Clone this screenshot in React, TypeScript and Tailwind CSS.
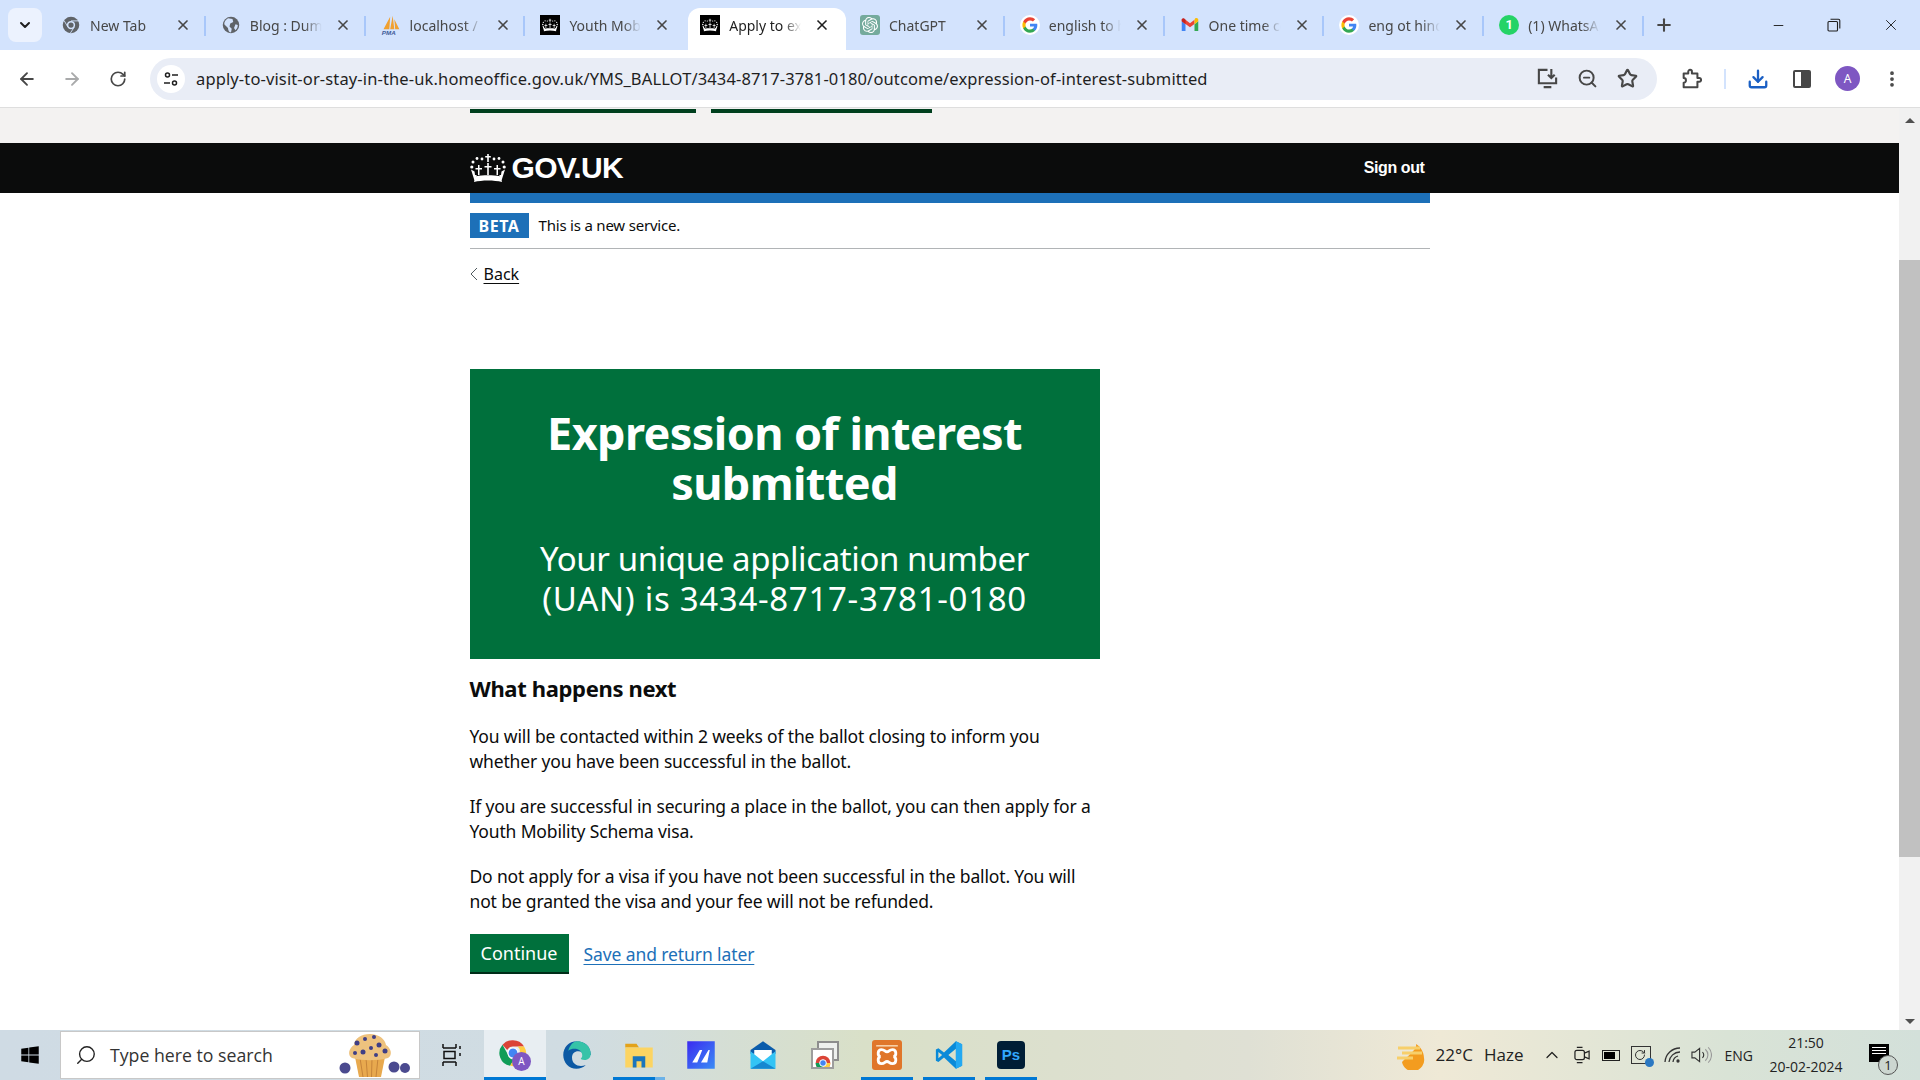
import { ArrowLeft, ArrowRight, RotateCw, X, Plus, Minus, Star, ZoomOut, ChevronDown, ChevronUp, Search, MoreVertical, Download } from "lucide-react";
import { FaWindows } from "react-icons/fa";
import { SiOpenai } from "react-icons/si";
import type { ReactNode } from "react";

const Crown = ({ className }: { className: string }) => (
  <svg viewBox="0 0 36 28" className={className} fill="currentColor">
    <path d="M17.200 0h1.600v2h2v1.600h-2V8h-1.600V3.600h-2V2h2z" />
    <circle cx="12" cy="5" r="1.400" /><circle cx="24" cy="5" r="1.400" />
    <circle cx="7" cy="4.500" r="1.400" /><circle cx="29" cy="4.500" r="1.400" />
    <circle cx="3" cy="8" r="1.500" /><circle cx="33" cy="8" r="1.500" />
    <circle cx="1.800" cy="13" r="1.600" /><circle cx="34.200" cy="13" r="1.600" />
    <path d="M17.200 9h1.600v3h2.700v1.500h-2.700V21h-1.600v-7.500h-2.700V12h2.700zM8 11h1.500v3h2.500v1.500H9.500V21H8v-5.500H5.500V14H8zM26.500 11H28v3h2.500v1.500H28V21h-1.500v-5.500H24V14h2.500z" />
    <path d="M1 15.500l3.500 2 .5 3.500h2l-1 1.200c7-1.300 17-1.300 24 0l-1-1.200h2l.5-3.500 3.500-2-3 9.500c-.500 1-.500 2 0 3-8-2-20-2-28 0 .500-1 .500-2 0-3z" />
  </svg>
);

const GoogleIcon = () => (
  <svg viewBox="0 0 24 24" className="w-4 h-4">
    <path fill="#4285F4" d="M23 12.300c0-.8-.1-1.600-.2-2.300H12v4.400h6.200c-.3 1.400-1.100 2.600-2.300 3.400v2.800h3.700c2.100-2 3.400-4.900 3.400-8.300z" />
    <path fill="#34A853" d="M12 23.500c3.100 0 5.700-1 7.600-2.800l-3.700-2.900c-1 .7-2.300 1.100-3.900 1.100-3 0-5.500-2-6.400-4.700H1.800v2.900C3.700 20.900 7.500 23.500 12 23.500z" />
    <path fill="#FBBC05" d="M5.600 14.200c-.5-1.400-.5-3 0-4.400V6.900H1.800c-1.600 3.200-1.600 7 0 10.200z" />
    <path fill="#EA4335" d="M12 5.100c1.700 0 3.200.6 4.400 1.700l3.300-3.300C17.700 1.600 15.100.5 12 .5 7.500.5 3.700 3.100 1.800 6.900l3.800 2.900C6.500 7.100 9 5.100 12 5.100z" />
  </svg>
);

const tabs: { title: string; icon: ReactNode; active?: boolean; noSep?: boolean }[] = [
  {
    title: "New Tab",
    icon: (
      <svg viewBox="0 0 24 24" className="w-[18px] h-[18px]">
        <circle cx="12" cy="12" r="11" fill="#5f6368" />
        <circle cx="12" cy="12" r="5.500" fill="#d3e3fd" />
        <circle cx="12" cy="12" r="3.500" fill="#5f6368" />
        <path d="M12 6.500h10M8 15l-5-8.500M16.500 14.500L11 23" stroke="#d3e3fd" strokeWidth="1.200" />
      </svg>
    ),
  },
  {
    title: "Blog : Dumm",
    icon: (
      <svg viewBox="0 0 24 24" className="w-[18px] h-[18px]">
        <circle cx="12" cy="12" r="11" fill="#5f6368" />
        <path d="M8 3l6 1 1 4-4 2-1 4 3 3-1 5c-3 0-4-4-4-6L3 11c0-4 2-6 5-8zM18 11l3 1c0 3-1 5-3 7l-2-3z" fill="#d3e3fd" />
      </svg>
    ),
  },
  {
    title: "localhost / ",
    icon: (
      <svg viewBox="0 0 24 24" className="w-5 h-5">
        <path d="M3 17L11 2l-1 15zM11 17l3-16 2 16zM17 17L16 5l6 12z" fill="#f0a030" />
        <text x="1" y="23.500" fontSize="7.500" fontWeight="700" fontStyle="italic" fill="#3d5a98" fontFamily="Liberation Sans, sans-serif">PMA</text>
      </svg>
    ),
  },
  {
    title: "Youth Mobil",
    icon: (
      <span className="w-5 h-5 bg-black text-white flex items-center justify-center">
        <Crown className="w-4 h-4" />
      </span>
    ),
    noSep: true,
  },
  {
    title: "Apply to exp",
    active: true,
    icon: (
      <span className="w-5 h-5 bg-black text-white flex items-center justify-center">
        <Crown className="w-4 h-4" />
      </span>
    ),
    noSep: true,
  },
  {
    title: "ChatGPT",
    icon: (
      <span className="w-5 h-5 bg-[#74aa9c] text-white rounded-[3px] flex items-center justify-center">
        <SiOpenai className="w-4 h-4" />
      </span>
    ),
  },
  {
    title: "english to h",
    icon: (
      <span className="w-5 h-5 bg-white rounded-full flex items-center justify-center">
        <GoogleIcon />
      </span>
    ),
  },
  {
    title: "One time co",
    icon: (
      <svg viewBox="0 0 24 24" className="w-[18px] h-[18px]">
        <path fill="#4285F4" d="M1 20h5V11L1 7z" />
        <path fill="#34A853" d="M18 20h5V7l-5 4z" />
        <path fill="#EA4335" d="M1 7l11 8 6-4.500V5l-6 4.500L6 5l-5-1z" />
        <path fill="#FBBC04" d="M18 5v6l5-4V5c0-2-2-3-4-2z" />
        <path fill="#C5221F" d="M1 7l5 4V5L4 3C2.500 2.500 1 3.500 1 5z" />
      </svg>
    ),
  },
  {
    title: "eng ot hindi",
    icon: (
      <span className="w-5 h-5 bg-white rounded-full flex items-center justify-center">
        <GoogleIcon />
      </span>
    ),
  },
  {
    title: "(1) WhatsAp",
    icon: (
      <span className="w-5 h-5 rounded-full bg-[#25d366] text-white flex items-center justify-center text-[13px] font-bold font-['Roboto',sans-serif]">
        1
      </span>
    ),
  },
];

const Muffin = () => (
  <svg viewBox="0 0 72 48" className="w-[72px] h-12">
    <circle cx="6" cy="37" r="5.500" fill="#4b4a8f" />
    <circle cx="55" cy="36" r="5.500" fill="#4b4a8f" />
    <circle cx="66" cy="37" r="5" fill="#4b4a8f" />
    <path d="M16 26h30l-4 20H20z" fill="#e8a94e" />
    <path d="M21 27l3 19M27 27l1.500 19M33 27l-.500 19M39 27l-2 19" stroke="#c6843a" strokeWidth="1" />
    <path d="M13 27c-5-3-3-10 2-13 1-7 7-11 16-11s15 5 16 11c5 3 7 10 2 13-10 3-26 3-36 0z" fill="#eec27e" />
    <g fill="#3f3e86">
      <circle cx="18" cy="12" r="2.500" /><circle cx="26" cy="8" r="2" /><circle cx="35" cy="6" r="2" />
      <circle cx="40" cy="14" r="2.500" /><circle cx="24" cy="21" r="2.500" /><circle cx="32" cy="17" r="2" />
      <circle cx="16" cy="22" r="2" /><circle cx="46" cy="20" r="2.500" /><circle cx="37" cy="24" r="2" />
    </g>
  </svg>
);

const apps: { icon: ReactNode; bar?: string; bg?: string }[] = [
  {
    bar: "left-0 right-0 bg-[#0078d4]",
    bg: "bg-[#e8eef2]",
    icon: (
      <span className="relative w-8 h-8 block">
        <svg viewBox="0 0 24 24" className="w-7 h-7">
          <path fill="#db4437" d="M12 1a11 11 0 0 1 9.500 5.500H12a5.500 5.500 0 0 0-5 3L3 5a11 11 0 0 1 9-4z" />
          <path fill="#0f9d58" d="M3 5l4.500 8a5.500 5.500 0 0 0 5.500 4.500L9.500 23A11 11 0 0 1 3 5z" />
          <path fill="#ffcd40" d="M21.500 6.500A11 11 0 0 1 9.500 23l4-7a5.500 5.500 0 0 0 2.500-9.500z" />
          <circle cx="12" cy="12" r="4.300" fill="#4285f4" stroke="#fff" strokeWidth="1" />
        </svg>
        <span className="absolute right-0 bottom-0 w-[19px] h-[19px] rounded-full bg-[#7e57c2] text-white text-[10px] flex items-center justify-center">A</span>
      </span>
    ),
  },
  {
    icon: (
      <svg viewBox="0 0 24 24" className="w-[30px] h-[30px]">
        <path fill="#0c59a4" d="M12 1C5.500 1 1 6 1 12c0 6 4.500 11 10.500 11 3 0 5.500-1 7.500-3-5 2-11 0-11-6 0-3 2-5 5-5 2.500 0 4 1.500 4 3h6c0-7-5-11-11.500-11z" />
        <path fill="#36c3a8" d="M12 1c6.500 0 11 4.500 11 10 0 3-2 5-5 5-2 0-3-1-3-1 1-1 1.500-2 1-4C15 7 9 5.500 5 8.500 6.500 4 9 1 12 1z" />
      </svg>
    ),
  },
  {
    bar: "left-[5px] right-[5px] bg-[linear-gradient(90deg,#0078d4_80%,#6cb2e8_80%)]",
    icon: (
      <svg viewBox="0 0 24 24" className="w-[30px] h-[30px]">
        <path fill="#e3a21a" d="M1 3h9l2 3h-11z" />
        <path fill="#fcd462" d="M1 6h22v16H1z" />
        <path fill="#1b75bc" d="M7 13h10v9h-3v-5h-4v5H7z" />
      </svg>
    ),
  },
  {
    icon: (
      <svg viewBox="0 0 24 24" className="w-[30px] h-[30px]">
        <defs>
          <linearGradient id="mm" x1="0" y1="0" x2="1" y2="1">
            <stop offset="0" stopColor="#3b2bf0" />
            <stop offset="1" stopColor="#3a8cf5" />
          </linearGradient>
        </defs>
        <rect x="1" y="1" width="22" height="22" fill="url(#mm)" />
        <path d="M5 18l6-10h2l-4 10zM12 18l6-10h1l-2 10z" fill="#fff" />
      </svg>
    ),
  },
  {
    icon: (
      <svg viewBox="0 0 24 24" className="w-[30px] h-[30px]">
        <path fill="#0b5cab" d="M12 1l10 7v3H2V8z" />
        <path fill="#fff" d="M5 8h14v6l-7 4-7-4z" />
        <path fill="#33c4f5" d="M2 9l10 8 10-8v14H2z" />
        <path fill="#1587d0" d="M2 23l10-6 10 6z" />
      </svg>
    ),
  },
  {
    icon: (
      <span className="relative w-7 h-7 block">
        <span className="absolute right-0 top-0 w-[22px] h-5 bg-[#eef0ee] border-2 border-[#8d8d8d]" />
        <span className="absolute left-0 bottom-0 w-[23px] h-[21px] bg-white border-2 border-[#9d9d9d] overflow-hidden flex items-end justify-center">
          <svg viewBox="0 0 24 24" className="w-4 h-4 -mb-1">
            <circle cx="12" cy="12" r="11" fill="#db4437" />
            <path d="M1 12a11 11 0 0 0 11 11V12z" fill="#0f9d58" />
            <path d="M23 12a11 11 0 0 1-11 11V12z" fill="#ffcd40" />
            <circle cx="12" cy="12" r="5" fill="#4285f4" stroke="#fff" strokeWidth="1.500" />
          </svg>
        </span>
      </span>
    ),
  },
  {
    bar: "left-[5px] right-[5px] bg-[#0078d4]",
    icon: (
      <span className="w-[30px] h-[30px] rounded-[3px] bg-[#e0762a] flex items-center justify-center">
        <svg viewBox="0 0 24 24" className="w-[26px] h-[26px]" fill="none">
          <path d="M2 3.500h20" stroke="#f6cfa8" strokeWidth="1.500" />
          <path d="M7 7C10 7 10 9 12 9C14 9 14 7 17 7C21 7 21 13 18 13.500C21 14 21 20 17 20C14 20 14 18 12 18C10 18 10 20 7 20C3 20 3 14 6 13.500C3 13 3 7 7 7Z" stroke="#fff" strokeWidth="2.600" />
        </svg>
      </span>
    ),
  },
  {
    bar: "left-[5px] right-[5px] bg-[#0078d4]",
    icon: (
      <svg viewBox="0 0 24 24" className="w-[30px] h-[30px]">
        <path fill="#0a8ad8" fillRule="evenodd" d="M17.500 1L8 10 3.500 6.500 1.500 7.500v9l2 1L8 14l9.500 9 5-2.400V3.400zM17.500 7v10l-6-5zM3.500 9.500L6.500 12l-3 2.500z" />
        <path fill="#23a9f2" fillRule="evenodd" d="M17.500 1l5 2.400v17.200l-5 2.400zM17.500 7v10l0 0z" />
      </svg>
    ),
  },
  {
    bar: "left-[5px] right-[5px] bg-[#0078d4]",
    icon: (
      <span className="w-7 h-7 rounded-[4px] bg-[#001e36] text-[#31a8ff] text-[15px] font-bold flex items-center justify-center font-['Liberation_Sans',sans-serif]">
        Ps
      </span>
    ),
  },
];

export default function App() {
  return (
    <div className="h-screen w-full flex flex-col overflow-hidden bg-white font-['Noto_Sans',sans-serif]">
      {/* tab strip */}
      <div className="h-[50px] bg-[#d3e3fd] flex items-start shrink-0">
        <div className="w-[46px] h-[34px] shrink-0 flex justify-end mt-2">
          <div className="w-[34px] h-[34px] mr-1 rounded-lg bg-[#ecf2fe] flex items-center justify-center">
            <ChevronDown className="w-4 h-4 text-[#1f1f1f]" strokeWidth={3} />
          </div>
        </div>
        {tabs.map((t) => (
          <div
            key={t.title}
            className="relative isolate w-[159.8px] h-[42px] mt-2 shrink-0 flex items-center pb-2 pl-[15px]"
          >
            {t.active && <span className="absolute -z-10 left-[3px] -right-px top-0 bottom-0 bg-white rounded-t-xl" />}
            <span className="w-5 h-5 flex items-center justify-center shrink-0">{t.icon}</span>
            <span className={`ml-[9px] w-[72px] overflow-hidden whitespace-nowrap text-[14px] [mask-image:linear-gradient(to_right,black_75%,transparent)] ${t.active ? "text-[#1f1f1f]" : "text-[#474747]"}`}>
              {t.title}
            </span>
            <X className={`w-4 h-4 ml-[13px] shrink-0 ${t.active ? "text-[#1f1f1f]" : "text-[#474747]"}`} strokeWidth={2.500} />
            {!t.noSep && !t.active && <span className="absolute right-0 top-2 h-5 w-[2px] bg-[#a8c7fa]" />}
          </div>
        ))}
        <div className="w-[41px] h-[34px] mt-2 flex items-center justify-center">
          <Plus className="w-5 h-5 text-[#474747]" strokeWidth={2.500} />
        </div>
        <div className="flex-1 flex justify-end h-[34px] mt-2 text-[#1f1f1f]">
          <div className="w-[54px] flex items-center justify-center"><Minus className="w-[15px] h-[15px]" strokeWidth={1.500} /></div>
          <div className="w-[57px] flex items-center justify-center">
            <svg viewBox="0 0 14 14" className="w-[14px] h-[14px]" fill="none" stroke="currentColor" strokeWidth="1.100">
              <rect x="1" y="3.500" width="9.500" height="9.500" rx="1" />
              <path d="M3.500 1.200h8a1.300 1.300 0 0 1 1.300 1.300v8" />
            </svg>
          </div>
          <div className="w-[58px] flex items-center justify-center"><X className="w-[18px] h-[18px]" strokeWidth={1.250} /></div>
        </div>
      </div>

      {/* toolbar */}
      <div className="h-[58px] bg-white border-b border-[#dedede] flex items-center shrink-0 rounded-tl-xl rounded-tr-xl">
        <div className="w-[150px] shrink-0 flex items-center text-[#474747]">
          <ArrowLeft className="w-5 h-5 ml-[17px]" strokeWidth={2.250} />
          <ArrowRight className="w-5 h-5 ml-[25px] text-[#a9aaab]" strokeWidth={2.250} />
          <RotateCw className="w-[18px] h-[18px] ml-[27px]" strokeWidth={2.250} />
        </div>
        <div className="w-[1507px] h-[42px] bg-[#e9edf6] rounded-full flex items-center">
          <span className="w-7 h-7 ml-[7px] rounded-full bg-white flex items-center justify-center">
            <svg viewBox="0 0 16 16" className="w-4 h-4" fill="none" stroke="#1f1f1f" strokeWidth="1.500">
              <circle cx="4.500" cy="4" r="2" /><path d="M9 4h6M1 12h6" /><circle cx="11.500" cy="12" r="2" />
            </svg>
          </span>
          <span className="ml-[11px] pt-[2px] text-[16.5px] tracking-[0.13px] text-[#1f1f1f] whitespace-nowrap flex-1">
            apply-to-visit-or-stay-in-the-uk.homeoffice.gov.uk/YMS_BALLOT/3434-8717-3781-0180/outcome/expression-of-interest-submitted
          </span>
          <span className="flex items-center text-[#474747]">
            <svg viewBox="0 0 24 24" className="w-[23px] h-[23px] mr-[18px]" fill="none" stroke="currentColor" strokeWidth="2.200">
              <path d="M12 3H3v14h18v-6M8 21h8" /><path d="M16 2v9M12.500 8l3.500 3.500L19.500 8" />
            </svg>
            <ZoomOut className="w-[21px] h-[21px] mr-[19px]" strokeWidth={2.250} />
            <Star className="w-[21px] h-[21px] mr-[19px]" strokeWidth={2.500} />
          </span>
        </div>
        <div className="flex-1 flex items-center text-[#474747]">
          <svg viewBox="0 0 24 24" className="w-[22px] h-[22px] ml-[23px]" fill="none" stroke="currentColor" strokeWidth="2.200" strokeLinejoin="round">
            <path d="M4 6h5V4a2 2 0 0 1 4 0v2h6v5h2a2 2 0 0 1 0 4h-2v6H4v-5a2.500 2.500 0 0 0 0-5z" />
          </svg>
          <span className="w-[2px] h-5 bg-[#d3e3fd] ml-[22px]" />
          <Download className="w-[22px] h-[22px] ml-[21px] text-[#1a5fc4]" strokeWidth={2.500} />
          <span className="w-[18px] h-[18px] ml-[24px] border-2 border-[#474747] rounded-[2px] flex justify-end">
            <span className="w-2 h-full bg-[#474747]" />
          </span>
          <span className="w-[25px] h-[25px] ml-[24px] rounded-full bg-[#7e57c2] text-white text-[12px] flex items-center justify-center">A</span>
          <MoreVertical className="w-5 h-5 ml-[22px]" strokeWidth={2.500} />
        </div>
      </div>

      {/* page */}
      <div className="flex-1 min-h-0 flex">
        <div className="flex-1 min-w-0 overflow-hidden bg-white">
          <div className="h-[35px] bg-[#f3f2f1] pt-px">
            <div className="w-[960px] mx-auto flex">
              <div className="w-[226px] h-1 bg-[#00401e]" />
              <div className="w-[221px] h-1 ml-[15px] bg-[#00401e]" />
            </div>
          </div>
          <div className="h-[50px] bg-[#0b0c0c] text-white">
            <div className="w-[960px] h-full mx-auto flex items-center justify-between pr-[5px] font-['Liberation_Sans',sans-serif]">
              <div className="flex items-center">
                <Crown className="w-9 h-7" />
                <span className="ml-[6px] text-[30px] leading-none font-bold tracking-[-0.7px]">GOV.UK</span>
              </div>
              <span className="text-[16px] font-bold tracking-[-0.4px]">Sign out</span>
            </div>
          </div>
          <div className="w-[960px] mx-auto text-[#0b0c0c]">
            <div className="h-[10px] bg-[#1d70b8]" />
            <div className="mt-[10px] pb-[10px] border-b border-[#b1b4b6] h-[36px] flex items-start">
              <span className="w-[59px] h-[25px] bg-[#1d70b8] text-white text-[16px] font-bold tracking-[0.5px] flex items-center justify-center">BETA</span>
              <span className="ml-[10px] text-[15px] tracking-[-0.2px] leading-[25px]">This is a new service.</span>
            </div>
            <a className="mt-[13px] flex items-center h-[24px] text-[16px]">
              <svg viewBox="0 0 8 14" className="w-2 h-3.5 mr-[6px]" fill="none" stroke="#505a5f" strokeWidth="1">
                <path d="M7 1L1 7l6 6" />
              </svg>
              <span className="underline underline-offset-[3px]">Back</span>
            </a>

            <div className="w-[630px] mt-[83px]">
              <div className="bg-[#00703c] text-white text-center h-[290px] pt-[39px]">
                <h1 className="text-[45px] tracking-[-0.6px] leading-[50px] font-bold">Expression of interest submitted</h1>
                <p className="mt-[31px] text-[33px] tracking-[-0.4px] leading-[40px]">
                  Your unique application number
                  <br />
                  <span className="tracking-[0.7px]">(UAN) is 3434-8717-3781-0180</span>
                </p>
              </div>
              <h2 className="mt-[14px] text-[22px] tracking-[-0.35px] leading-[30px] font-bold">What happens next</h2>
              <p className="mt-[21px] text-[17.5px] tracking-[-0.16px] leading-[25px]">
                You will be contacted within 2 weeks of the ballot closing to inform you whether you have been successful in the ballot.
              </p>
              <p className="mt-[20px] text-[17.5px] tracking-[-0.16px] leading-[25px]">
                If you are successful in securing a place in the ballot, you can then apply for a Youth Mobility Schema visa.
              </p>
              <p className="mt-[20px] text-[17.5px] tracking-[-0.16px] leading-[25px]">
                Do not apply for a visa if you have not been successful in the ballot. You will not be granted the visa and your fee will not be refunded.
              </p>
              <div className="mt-[20px] flex items-center">
                <button className="w-[99px] h-10 bg-[#00703c] text-white text-[18px] border-b-2 border-[#002d18]">Continue</button>
                <a className="ml-[15px] text-[17.5px] tracking-[-0.1px] text-[#1d70b8] underline underline-offset-[3px]">Save and return later</a>
              </div>
            </div>
          </div>
        </div>

        {/* scrollbar */}
        <div className="w-[21px] shrink-0 bg-[#f1f1f1] flex flex-col items-center justify-between">
          <div className="w-full flex flex-col items-center">
            <div className="h-[19px] pt-[10px] flex items-start">
              <span className="w-0 h-0 border-x-[5px] border-x-transparent border-b-[5px] border-b-[#505050]" />
            </div>
            <div className="w-full h-[597px] mt-[133px] bg-[#c1c1c1]" />
          </div>
          <div className="h-[17px]">
            <span className="block w-0 h-0 mt-[6px] border-x-[5px] border-x-transparent border-t-[5px] border-t-[#505050]" />
          </div>
        </div>
      </div>

      {/* taskbar */}
      <div className="h-[50px] shrink-0 flex items-stretch bg-[linear-gradient(90deg,#cfdbe4_0%,#d0dce2_30%,#d9e0c8_45%,#dfe0d4_65%,#efe9d6_75%,#d9e3d6_90%,#d3e0da_100%)] text-[#111] font-['Open_Sans',sans-serif]">
        <div className="w-[60px] flex items-center justify-center">
          <FaWindows className="w-5 h-5 text-black" />
        </div>
        <div className="w-[360px] my-px bg-white border border-[#c8c8c8] flex items-center pl-[14px] pr-2">
          <Search className="w-[22px] h-[22px] -scale-x-100 text-[#222]" strokeWidth={1.500} />
          <span className="ml-[13px] text-[17.7px] text-[#333] flex-1">Type here to search</span>
          <Muffin />
        </div>
        <div className="w-[64px] flex items-center justify-center">
          <svg viewBox="0 0 20 24" className="w-5 h-6" fill="none" stroke="#111" strokeWidth="1.500">
            <path d="M1 5h13M1 1v4M14 1v4M1 19h13M1 23v-4M14 23v-4M2 8.500h11v7H2zM18 3v3M18 10v3" />
          </svg>
        </div>
        {apps.map((a, i) => (
          <div key={i} className={`w-[62px] flex items-center justify-center relative ${a.bg ?? ""}`}>
            {a.icon}
            {a.bar && <span className={`absolute bottom-0 h-[3px] ${a.bar}`} />}
          </div>
        ))}
        <div className="flex-1 flex items-center justify-end">
          <svg viewBox="0 0 30 30" className="w-[30px] h-[30px]">
            <path d="M6 22a11 11 0 0 0 22-4c0-6-4-12-8-14 1 5-4 8-14 18z" fill="#f39c1f" />
            <path d="M2 8h22M6 13h20M1 18h16" stroke="#f7cf6a" strokeWidth="3" />
          </svg>
          <span className="ml-[10px] text-[17px] text-[#222]">22°C</span>
          <span className="ml-[11px] text-[17px] text-[#222]">Haze</span>
          <ChevronUp className="w-5 h-5 ml-[18px] text-[#222]" strokeWidth={1.500} />
          <svg viewBox="0 0 18 20" className="w-[17px] h-5 ml-[12px]" fill="none" stroke="#222" strokeWidth="1.300">
            <rect x="1" y="5" width="10" height="10" rx="2" /><path d="M11 8l5-2v8l-5-2M3 2h6M3 18h6" />
          </svg>
          <span className="w-[18px] h-[11px] ml-[11px] border border-[#222] p-px flex"><span className="w-[11px] bg-black" /></span>
          <span className="relative w-5 h-[18px] ml-[11px] border border-[#333]">
            <RotateCw className="w-3 h-3 m-[2px] text-[#333]" />
            <span className="absolute -right-1 -bottom-1 w-[9px] h-[9px] rounded-full bg-[#2b78c2]" />
          </span>
          <svg viewBox="0 0 20 20" className="w-5 h-5 ml-[12px]" fill="none" stroke="#333" strokeWidth="1.300">
            <path d="M2 17a15 15 0 0 1 15-14M6 17a11 11 0 0 1 11-10M10 17a7 7 0 0 1 5-6" /><circle cx="15" cy="16" r="1" fill="#333" />
          </svg>
          <svg viewBox="0 0 22 20" className="w-[21px] h-5 ml-[8px]" fill="none" stroke="#333" strokeWidth="1.200">
            <path d="M1 7h3l5-4v14l-5-4H1zM12 7a4 4 0 0 1 0 6" /><path d="M15 4a8 8 0 0 1 0 12M18 2a11 11 0 0 1 0 16" stroke="#999" />
          </svg>
          <span className="ml-[13px] text-[14px] text-[#222]">ENG</span>
          <div className="w-[106px] mr-px text-center text-[14px] leading-[24px] text-[#222]">
            <div>21:50</div>
            <div>20-02-2024</div>
          </div>
          <div className="relative w-[60px] h-full flex items-center pl-[9px]">
            <span className="w-5 h-[18px] mb-1 bg-black flex flex-col gap-[2px] px-[3px] py-[3px]">
              <span className="h-px bg-white" /><span className="h-px bg-white" /><span className="h-px bg-white" />
            </span>
            <span className="absolute left-[18px] bottom-[5px] w-5 h-5 rounded-full border border-[#555] bg-[#ccd6d0] text-[13px] leading-none text-[#222] flex items-center justify-center">1</span>
          </div>
        </div>
      </div>
    </div>
  );
}
